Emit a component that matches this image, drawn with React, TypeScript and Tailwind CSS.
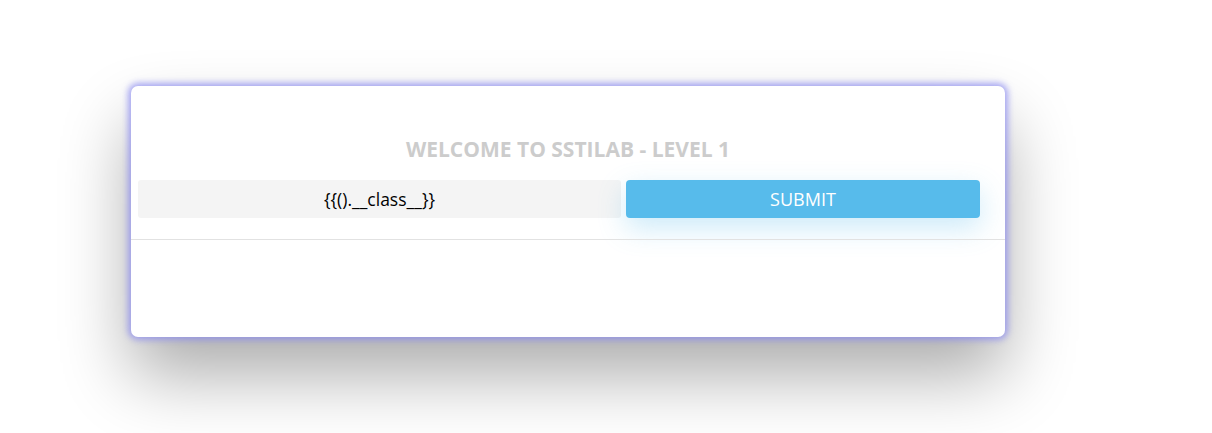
const App = () => {
  return (
    <div className="min-h-[433px] bg-white pt-[86px] pl-[131px] font-['Open_Sans',sans-serif]">
      <div className="w-[874px] h-[251px] bg-white rounded-[7px] shadow-[0_0_6px_3px_rgba(140,140,240,0.75),0_38px_70px_rgba(0,0,0,0.33)] flex flex-col">
        <h1 className="pt-[49px] text-center text-[21px] leading-7 font-bold text-[#cccccc]">
          WELCOME TO SSTILAB - LEVEL 1
        </h1>
        <form
          className="flex mt-[17px] pl-[7px] pr-[25px] gap-[5px]"
          onSubmit={(e) => e.preventDefault()}>
          <input
            defaultValue="{{().__class__}}"
            className="w-[483px] h-[38px] bg-[#f4f4f4] rounded-[3px] text-center text-[17.5px] text-black outline-none"
          />
          <button
            type="submit"
            className="flex-1 h-[38px] bg-[#57bbeb] rounded-[4px] text-white text-[18px] shadow-[0_10px_28px_rgba(87,187,235,0.3)]">
            SUBMIT
          </button>
        </form>
        <div className="mt-[21px] border-t border-[#e2e2e2]" />
      </div>
    </div>
  );
};

export default App;
